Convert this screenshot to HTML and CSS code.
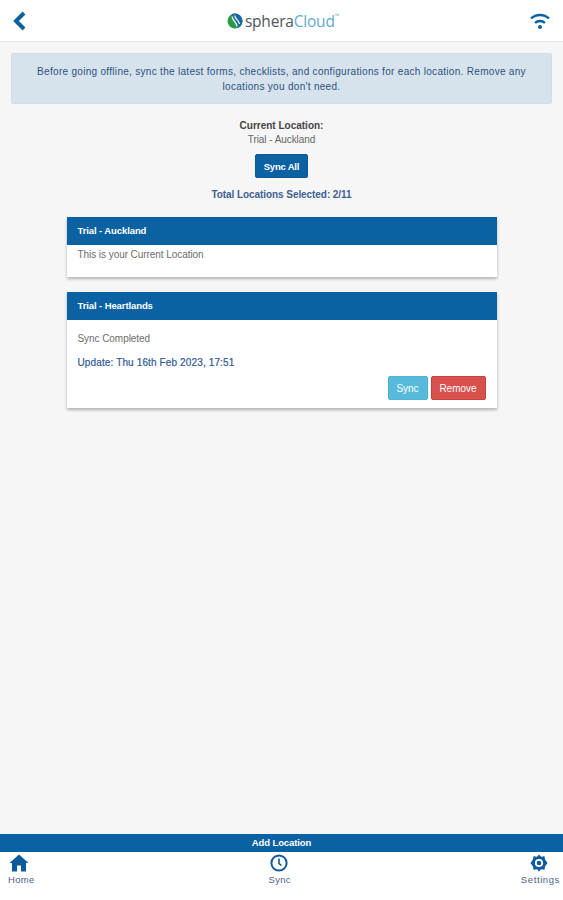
FILE: index.html
```html
<!DOCTYPE html>
<html lang="en">
<head>
<meta charset="utf-8">
<title>Locations</title>
<link rel="stylesheet" href="styles.css">
</head>
<body>
<div class="app">
  <header class="topbar">
    <svg class="back" width="16" height="22" viewBox="0 0 16 22"><path d="M13 3 L5 11 L13 19" fill="none" stroke="#0a62a3" stroke-width="4"/></svg>
    <div class="brand">
      <svg class="globe" width="16" height="16" viewBox="0 0 16 16">
        <circle cx="8" cy="8" r="7.5" fill="#2a9a48"/>
        <path d="M5 1.1A7.5 7.5 0 0 1 15.5 8 7.5 7.5 0 0 1 11 14.9C11.5 10 4 7 5 1.1Z" fill="#1a6aa6"/>
        <path d="M5.2 3.5C4.8 7 10 9 10 13.5M7.8 2.5C7.5 5.5 12 7.5 12.5 11" fill="none" stroke="#e8f2ee" stroke-width="1.3"/>
      </svg>
      <span class="sphera">sphera</span><span class="cloud">Cloud</span><span class="tm">™</span>
    </div>
    <svg class="wifi" width="22" height="18" viewBox="0 0 22 18">
      <path d="M2 6.5C7 1.8 15 1.8 20 6.5" fill="none" stroke="#0a62a3" stroke-width="2.4"/>
      <path d="M6 10.8C8.8 8.3 13.2 8.3 16 10.8" fill="none" stroke="#0a62a3" stroke-width="2.4"/>
      <circle cx="11" cy="15" r="2" fill="#0a62a3"/>
    </svg>
  </header>

  <main class="content">
    <div class="alert">Before going offline, sync the latest forms, checklists, and configurations for each location. Remove any locations you don't need.</div>

    <section class="current">
      <div class="current-label">Current Location:</div>
      <div class="current-name">Trial - Auckland</div>
      <button class="btn btn-primary">Sync All</button>
      <div class="total">Total Locations Selected: 2/11</div>
    </section>

    <section class="card card-current">
      <h2 class="card-head">Trial - Auckland</h2>
      <div class="card-body">
        <p class="muted">This is your Current Location</p>
      </div>
    </section>

    <section class="card">
      <h2 class="card-head">Trial - Heartlands</h2>
      <div class="card-body card-body-full">
        <p class="muted">Sync Completed</p>
        <p class="update">Update: Thu 16th Feb 2023, 17:51</p>
        <div class="actions">
          <button class="btn btn-info">Sync</button>
          <button class="btn btn-danger">Remove</button>
        </div>
      </div>
    </section>
  </main>

  <div class="add-bar">Add Location</div>

  <nav class="tabs">
    <div class="tab tab-home">
      <svg width="20" height="18" viewBox="0 0 20 18"><path d="M10 .5 L19.5 9 L17 9 L17 17.5 L12 17.5 L12 11.5 L8 11.5 L8 17.5 L3 17.5 L3 9 L.5 9 Z" fill="#0a5a9c"/></svg>
      <span>Home</span>
    </div>
    <div class="tab tab-sync">
      <svg width="18" height="18" viewBox="0 0 18 18"><circle cx="9" cy="9" r="7.6" fill="none" stroke="#0a5a9c" stroke-width="2"/><path d="M9 4.5V9.5L11.5 11.5" fill="none" stroke="#0a5a9c" stroke-width="1.6"/></svg>
      <span>Sync</span>
    </div>
    <div class="tab tab-settings">
      <svg width="18" height="18" viewBox="0 0 18 18"><path d="M9 .5 L11 2.8 L14.5 2.2 L15 5.6 L17.5 9 L15 12.4 L14.5 15.8 L11 15.2 L9 17.5 L7 15.2 L3.5 15.8 L3 12.4 L.5 9 L3 5.6 L3.5 2.2 L7 2.8 Z" fill="#0a5a9c"/><circle cx="9" cy="9" r="3.2" fill="none" stroke="#fff" stroke-width="1.8"/></svg>
      <span>Settings</span>
    </div>
  </nav>
</div>
</body>
</html>
```
FILE: styles.css
```css
* { box-sizing: border-box; }
html, body { margin: 0; height: 100%; }
body {
  font-family: "Liberation Sans", Arial, sans-serif;
  font-size: 10px;
  color: #555;
  background: #f6f6f7;
}
.app {
  height: 900px;
  display: flex;
  flex-direction: column;
  overflow: hidden;
}
.topbar {
  height: 42px;
  flex: none;
  background: #fff;
  border-bottom: 1px solid #e4e4e4;
  display: flex;
  align-items: center;
  justify-content: space-between;
  padding: 0 12px 0 11px;
}
.brand {
  display: flex;
  align-items: center;
  margin-left: 10px;
  font-family: "Open Sans", "Liberation Sans", sans-serif;
  font-size: 15.5px;
  letter-spacing: -0.2px;
  line-height: 18px;
}
.globe { margin-right: 2px; }
.sphera { color: #50555a; }
.cloud { color: #62abd4; }
.tm { color: #8fa8b8; font-size: 6px; align-self: flex-start; line-height: 8px; }
.content {
  flex: 1;
  padding: 11px 11px 0;
  min-height: 0;
}
.alert {
  height: 51px;
  background: #d6e3ec;
  border: 1px solid #d0dee8;
  border-radius: 2px;
  color: #2b5180;
  text-align: center;
  padding: 10px 20px 0;
  line-height: 15px;
  font-size: 10px;
  letter-spacing: 0.3px;
}
.current {
  display: flex;
  flex-direction: column;
  align-items: center;
  padding-top: 15px;
}
.current-label { font-weight: 700; color: #444; line-height: 14px; }
.current-name { color: #666; line-height: 14px; letter-spacing: -0.06px; }
.btn {
  font-family: inherit;
  font-size: 10px;
  height: 24px;
  border-radius: 2px;
  color: #fff;
  padding: 0;
  cursor: pointer;
}
.btn-primary {
  width: 53px;
  margin-top: 7px;
  background: #0a62a3;
  border: 1px solid #0a5a98;
  font-weight: 700;
  font-size: 9.5px;
  letter-spacing: -0.2px;
}
.total {
  margin-top: 10px;
  line-height: 14px;
  font-weight: 700;
  color: #3d6090;
  letter-spacing: -0.07px;
}
.card {
  width: 430px;
  margin: 15px auto 0;
  background: #fff;
  box-shadow: 0 2px 3px rgba(0, 0, 0, 0.28);
}
.card-head {
  margin: 0;
  height: 28px;
  background: #0a62a3;
  color: #fff;
  font-size: 9.5px;
  font-weight: 700;
  line-height: 27px;
  padding-left: 11px;
  letter-spacing: -0.1px;
}
.card-body {
  height: 32px;
  padding: 3px 11px 0;
}
.card-body-full {
  height: 88px;
  padding-top: 12px;
}
.card-body p { margin: 0; line-height: 14px; letter-spacing: -0.06px; }
.muted { color: #6d6d6d; }
.card-body .update {
  margin-top: 10px;
  color: #2f5a94;
  -webkit-text-stroke: 0.2px #2f5a94;
  letter-spacing: 0.13px;
}
.actions {
  display: flex;
  justify-content: flex-end;
  gap: 3px;
  margin-top: 6px;
}
.btn-info { width: 40px; background: #58bada; border: 1px solid #4fb2d3; }
.btn-danger { width: 55px; background: #d9514e; border: 1px solid #c93f3c; }
.add-bar {
  flex: none;
  height: 18px;
  background: #0a62a3;
  color: #fff;
  font-weight: 700;
  font-size: 9.5px;
  text-align: center;
  line-height: 17px;
  letter-spacing: -0.1px;
}
.tabs {
  flex: none;
  height: 48px;
  background: #fff;
  display: flex;
  justify-content: space-between;
  padding: 2px 3px 0 8px;
}
.tab {
  display: flex;
  flex-direction: column;
  align-items: center;
  color: #4c5f85;
  font-size: 9.5px;
  line-height: 12px;
  gap: 2px;
}
.tab span { letter-spacing: 0.3px; }
.tab-home svg { margin-right: 5px; }
.tab-sync { margin-left: 4px; }
.tab-sync svg { margin-right: 2px; }
.tab-settings span { letter-spacing: 0.6px; }
.tab-settings svg { margin-right: 2px; }
```
